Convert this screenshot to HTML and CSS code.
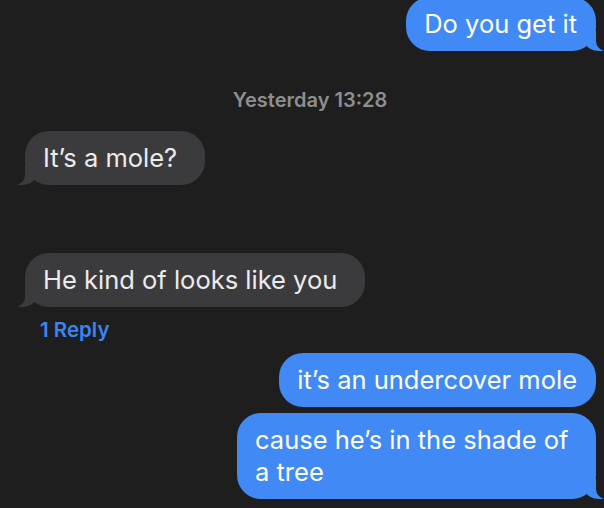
FILE: index.html
```html
<!DOCTYPE html>
<html lang="en">
<head>
<meta charset="utf-8">
<title>Messages</title>
<link rel="stylesheet" href="styles.css">
</head>
<body>
<div class="thread">
  <div class="bubble sent tail first">Do you get it</div>
  <div class="timestamp">Yesterday 13:28</div>
  <div class="bubble received tail msg-mole">It’s a mole?</div>
  <div class="bubble received tail msg-looks">He kind of looks like you</div>
  <div class="reply">1 Reply</div>
  <div class="bubble sent msg-under">it’s an undercover mole</div>
  <div class="bubble sent tail msg-shade">cause he’s in the shade of a tree</div>
</div>
</body>
</html>
```

FILE: styles.css
```css
:root {
  --bg: #1e1e1e;
  --blue: #418af5;
  --gray: #3b3b3d;
}

html, body {
  margin: 0;
  padding: 0;
  background: var(--bg);
  height: 100%;
  overflow: hidden;
}

.thread {
  display: flex;
  flex-direction: column;
  font-family: Inter, "Noto Sans", sans-serif;
}

.bubble {
  position: relative;
  box-sizing: border-box;
  max-width: 359px;
  padding: 11px 19px 11px 18px;
  font-size: 25.5px;
  line-height: 32px;
  border-radius: 24px;
}

.sent {
  align-self: flex-end;
  margin-right: 8px;
  background: var(--blue);
  color: #ffffff;
}

.received {
  align-self: flex-start;
  margin-left: 25px;
  padding-right: 28px;
  background: var(--gray);
  color: #ebebeb;
}

.tail::before,
.tail::after {
  content: "";
  position: absolute;
  bottom: 0;
  height: 20px;
}

.sent.tail::before {
  right: -7px;
  width: 20px;
  background: var(--blue);
  border-bottom-left-radius: 16px 14px;
}

.sent.tail::after {
  right: -26px;
  width: 26px;
  background: var(--bg);
  border-bottom-left-radius: 10px;
}

.received.tail::before {
  left: -7px;
  width: 20px;
  background: var(--gray);
  border-bottom-right-radius: 16px 14px;
}

.received.tail::after {
  left: -26px;
  width: 26px;
  background: var(--bg);
  border-bottom-right-radius: 10px;
}

.first {
  margin-top: -3px;
}

.timestamp {
  margin-top: 37px;
  text-align: center;
  font-size: 20px;
  font-weight: 600;
  line-height: 24px;
  color: #8e8e8e;
  padding-left: 16px;
}

.msg-mole {
  margin-top: 19px;
}

.msg-looks {
  margin-top: 68px;
}

.reply {
  margin-top: 11px;
  margin-left: 40px;
  font-size: 20.5px;
  font-weight: 600;
  line-height: 24px;
  color: #3a84f5;
}

.msg-under {
  margin-top: 11px;
}

.msg-shade {
  margin-top: 6px;
}
```
